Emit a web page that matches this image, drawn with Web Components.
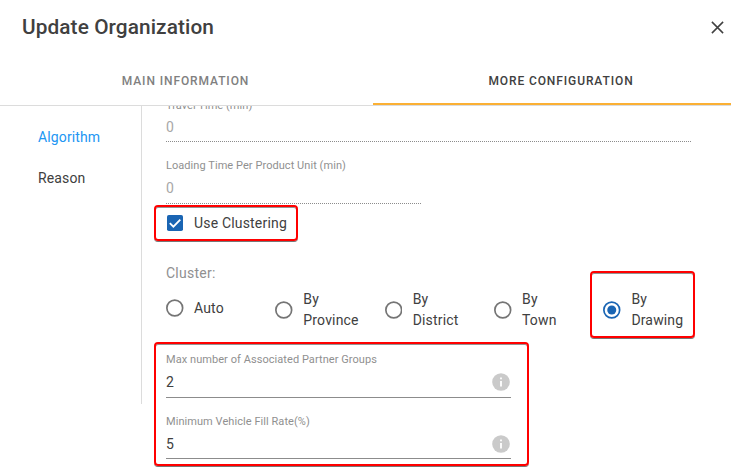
<!DOCTYPE html>
<html lang="en">
<head>
<meta charset="utf-8">
<title>Update Organization</title>
<style>
html,body{margin:0;height:470px;overflow:hidden;background:#fff}
body{font-family:Roboto,sans-serif;color:#404040}
</style>
</head>
<body>
<org-dialog></org-dialog>
<script>
const define = (name, html, setup) => {
  customElements.define(name, class extends HTMLElement {
    connectedCallback() {
      if (this.shadowRoot) return;
      const t = document.createElement('template');
      t.innerHTML = html;
      this.attachShadow({mode: 'open'}).append(t.content.cloneNode(true));
      if (setup) setup(this, this.shadowRoot);
    }
  });
};

define('close-button', `<style>
:host{display:block;width:13px;height:13px}svg{display:block}
</style><svg width="13" height="13" viewBox="0 0 13 13"><path d="M.9.9 12.1 12.1M12.1.9.9 12.1" stroke="#404040" stroke-width="1.5"/></svg>`);

define('tab-item', `<style>
:host{display:flex;align-items:center;justify-content:center;box-sizing:border-box;height:49px;padding:2px 2px 0 0;border-bottom:2px solid transparent;font-size:12px;font-weight:500;letter-spacing:.9px;color:#808080}
:host([active]){color:#404040;border-color:#fbb034;padding:2px 0 0 18px}
</style><slot></slot>`);

define('nav-item', `<style>
:host{display:block;height:41px;line-height:41px;padding-left:38px;font-size:14px;letter-spacing:.13px;color:#404040}
:host([active]){color:#2196f3}
</style><slot></slot>`);

define('info-icon', `<style>
:host{display:block;width:18px;height:18px}svg{display:block}
</style><svg width="18" height="18" viewBox="0 0 18 18"><circle cx="9" cy="9" r="8.8" fill="#cacaca"/><path d="M8.1 4.5h1.8v1.8H8.1zM8.1 8h1.8v5.4H8.1z" fill="#fff"/></svg>`);

define('text-field', `<style>
:host{display:flex;flex-direction:column;box-sizing:border-box;height:47px;width:345px;border-bottom:1px solid #8c8c8c}
:host([disabled]){border-bottom:0}
.label{height:16px;line-height:16px;padding-top:1px;margin-bottom:-1px;font-size:11px;color:#909090;white-space:nowrap;letter-spacing:.06px}
.row{display:flex;align-items:center;justify-content:space-between;flex:1;font-size:14px;line-height:16px;color:#404040}
:host([disabled]) .row{color:#a8a8a8}
.dots{display:none;height:1px;background:repeating-linear-gradient(90deg,#8c8c8c 0 1px,transparent 1px 2px)}
:host([disabled]) .dots{display:block}
.icon{padding-right:1.5px}
</style><div class="label"></div><div class="row"><slot></slot><div class="icon"><slot name="icon"></slot></div></div><div class="dots"></div>`,
(el, root) => { root.querySelector('.label').textContent = el.getAttribute('label'); });

define('check-box', `<style>
:host{display:flex;align-items:center;gap:11px;height:18px;padding-left:1px;font-size:14px;letter-spacing:.18px;color:#404040}
svg{display:block}
</style><svg width="16" height="16" viewBox="0 0 16 16"><rect width="16" height="16" rx="1.8" fill="#1a65b3"/><path d="M2.8 8.1 6.4 11.7 13.3 4.6" fill="none" stroke="#fff" stroke-width="1.8"/></svg><slot></slot>`);

define('radio-option', `<style>
:host{display:flex;align-items:center;gap:10.5px;width:109.35px;font-size:14px;line-height:21px;letter-spacing:.16px;color:#404040}
svg{display:block;flex:none}
.dot{display:none;fill:#1a65b3}.ring{fill:none;stroke:#757575;stroke-width:1.7}
:host([checked]) .dot{display:block}:host([checked]) .ring{stroke:#1a65b3}
</style><svg width="17.5" height="18" viewBox="0 0 17.5 18"><circle class="ring" cx="8.75" cy="9" r="7.9"/><circle class="dot" cx="8.75" cy="9" r="4.5"/></svg><div><slot></slot></div>`);

define('focus-frame', `<style>
:host{display:block;position:absolute;box-sizing:border-box;border:2px solid #f00;border-radius:4px;box-shadow:0 1px 0 #777,inset 0 1px 0 rgba(90,90,90,.65);pointer-events:none}
</style>`);

define('config-panel', `<style>
:host{display:flex;height:364px;overflow:hidden}
nav{box-sizing:border-box;width:142px;height:298px;padding-top:11px;border-right:1px solid #dcdcdc}
main{flex:1;padding-left:24px}
.first{margin-top:-9px;width:525px;height:45px}
.second{margin-top:15px;width:255px}
check-box{margin-top:10px}
.caption{margin-top:31px;height:20px;line-height:20px;font-size:14px;letter-spacing:.25px;color:#909090}
.radios{display:flex;margin-top:6px;height:42px}
radio-option{height:42px}
radio-option:first-child{height:38px}
.third{margin-top:20px}
.fourth{margin-top:15px;height:46px}
</style><nav><nav-item active>Algorithm</nav-item><nav-item>Reason</nav-item></nav>
<main>
<text-field class="first" disabled label="Travel Time (min)">0</text-field>
<text-field class="second" disabled label="Loading Time Per Product Unit (min)">0</text-field>
<check-box>Use Clustering</check-box>
<div class="caption">Cluster:</div>
<div class="radios"><radio-option>Auto</radio-option><radio-option>By<br>Province</radio-option><radio-option>By<br>District</radio-option><radio-option>By<br>Town</radio-option><radio-option checked>By<br>Drawing</radio-option></div>
<text-field class="third" label="Max number of Associated Partner Groups">2<info-icon slot="icon"></info-icon></text-field>
<text-field class="fourth" label="Minimum Vehicle Fill Rate(%)">5<info-icon slot="icon"></info-icon></text-field>
</main>`);

define('org-dialog', `<style>
:host{display:block;position:relative;width:731px;height:470px;overflow:hidden;background:#fff}
header{display:flex;justify-content:space-between;align-items:center;box-sizing:border-box;height:56px;padding:0 7px 2px 22px}
h1{margin:0;font-size:20.8px;font-weight:500;letter-spacing:.1px;color:#404040}
.tabs{display:grid;grid-template-columns:373px 358px;box-sizing:border-box;height:50px;border-bottom:1px solid #dcdcdc}
.a{left:154px;top:205px;width:144px;height:36px}
.b{left:590px;top:271px;width:105px;height:67px}
.c{left:154px;top:342px;width:375px;height:124px}
</style>
<header><h1>Update Organization</h1><close-button></close-button></header>
<div class="tabs"><tab-item>MAIN INFORMATION</tab-item><tab-item active>MORE CONFIGURATION</tab-item></div>
<config-panel></config-panel>
<focus-frame class="a"></focus-frame><focus-frame class="b"></focus-frame><focus-frame class="c"></focus-frame>`);
</script>
</body>
</html>
